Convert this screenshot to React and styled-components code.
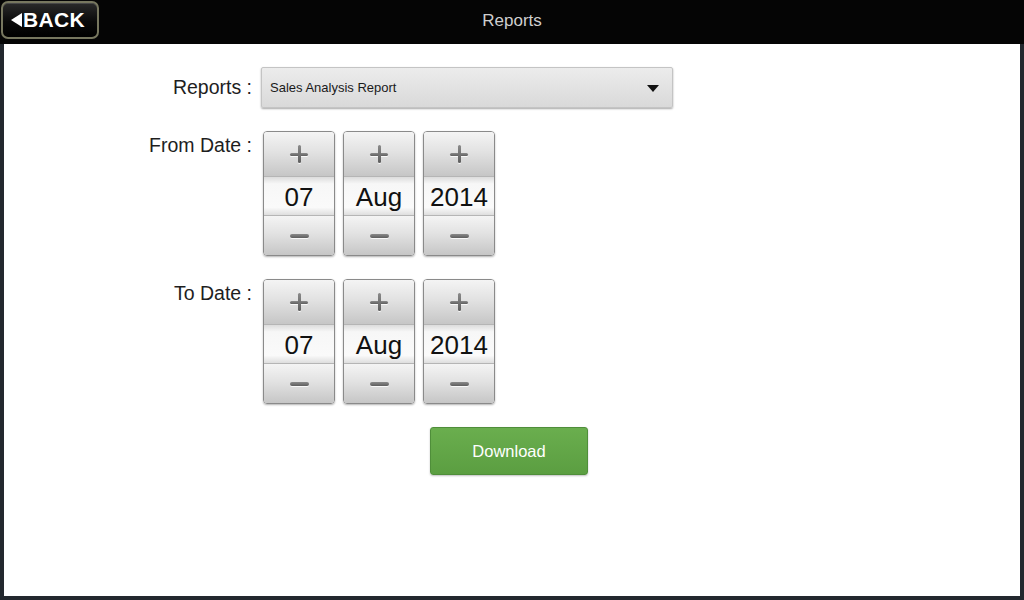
import React from "react";
import styled, { createGlobalStyle } from "styled-components";

const Global = createGlobalStyle`
  html, body { margin: 0; padding: 0; background: #23282e; }
  body { font-family: "Liberation Sans", Arial, sans-serif; }
  * { box-sizing: border-box; }
`;

const Screen = styled.div`
  width: 1024px;
  height: 600px;
  display: flex;
  flex-direction: column;
  background: #23282e;
  overflow: hidden;
`;

const TopBar = styled.header`
  height: 44px;
  flex: 0 0 44px;
  background: #050505;
  display: flex;
  align-items: center;
  position: relative;
`;

const BackButton = styled.button`
  position: absolute;
  left: 1px;
  top: 1px;
  width: 98px;
  height: 38px;
  border: 2px solid #77775f;
  border-radius: 7px;
  background: linear-gradient(#2a2a2a, #0a0a0a 55%, #000);
  box-shadow: inset 0 1px 0 rgba(255,255,255,0.15);
  color: #fff;
  display: flex;
  align-items: center;
  justify-content: center;
  gap: 1px;
  padding: 0 4px 0 0;
  font-family: "Liberation Sans", Arial, sans-serif;
  font-weight: bold;
  font-size: 21px;
  letter-spacing: 0.3px;
  cursor: pointer;
`;

const Title = styled.h1`
  flex: 1;
  margin: 0;
  text-align: center;
  color: #cfcfcf;
  font-size: 17px;
  font-weight: normal;
  font-family: "Liberation Sans", Arial, sans-serif;
  padding-bottom: 3px;
`;

const Content = styled.main`
  flex: 1;
  margin: 0 4px 4px 4px;
  background: #fff;
  padding-top: 23px;
  display: flex;
  flex-direction: column;
`;

const Form = styled.div`
  display: grid;
  grid-template-columns: 248px auto;
  column-gap: 9px;
  row-gap: 23px;
  align-items: start;
`;

const Label = styled.div`
  text-align: right;
  font-size: 19.5px;
  color: #1e1e1e;
  padding-top: ${(p) => p.$top}px;
  line-height: 24px;
`;

const Select = styled.div`
  width: 412px;
  height: 41px;
  border: 1px solid #c4c4c4;
  border-radius: 2px;
  background: linear-gradient(#ececec, #d9d9d9);
  box-shadow: 0 1px 2px rgba(0,0,0,0.35);
  display: flex;
  align-items: center;
  justify-content: space-between;
  padding: 0 13px 0 8px;
  font-size: 13px;
  color: #1a1a1a;
`;

const Caret = styled.span`
  width: 0;
  height: 0;
  border-left: 6px solid transparent;
  border-right: 6px solid transparent;
  border-top: 7px solid #111;
  margin-top: 1px;
`;

const Steppers = styled.div`
  display: flex;
  gap: 8px;
  margin-left: 2px;
`;

const Stepper = styled.div`
  width: 72px;
  height: 125px;
  border: 1px solid #8a8a8a;
  border-radius: 4px;
  overflow: hidden;
  display: flex;
  flex-direction: column;
  box-shadow: 0 1px 2px rgba(0,0,0,0.3);
`;

const StepButton = styled.div`
  height: ${(p) => p.$h}px;
  background: linear-gradient(#f4f4f4, #e2e2e2 45%, #c6c6c6);
  display: flex;
  align-items: center;
  justify-content: center;
  position: relative;
`;

const Value = styled.div`
  height: 40px;
  background: linear-gradient(#dcdcdc, #f7f7f7 18%, #fafafa 80%, #dedede);
  border-top: 1px solid #b5b5b5;
  border-bottom: 1px solid #b5b5b5;
  display: flex;
  align-items: center;
  justify-content: center;
  font-size: 26px;
  padding-top: 2px;
  color: #111;
  font-family: "Liberation Sans", Arial, sans-serif;
`;

const Bar = styled.span`
  position: absolute;
  background: linear-gradient(#8a8a8a, #5e5e5e);
  border-radius: 2px;
  box-shadow: 0 1px 0 rgba(255,255,255,0.8);
`;

const PlusH = styled(Bar)`
  width: 18px;
  height: 3px;
`;
const PlusV = styled(Bar)`
  width: 3px;
  height: 18px;
`;
const Minus = styled(Bar)`
  width: 19px;
  height: 4px;
`;

const DownloadRow = styled.div`
  display: flex;
  justify-content: center;
  margin-top: 23px;
  padding-right: 6px;
`;

const Download = styled.button`
  width: 158px;
  height: 48px;
  border: 1px solid #4f8e3a;
  border-radius: 3px;
  background: linear-gradient(#6aae4e, #5b9e41);
  color: #fff;
  font-family: "Liberation Sans", Arial, sans-serif;
  font-size: 16.5px;
  box-shadow: 0 1px 2px rgba(0,0,0,0.25);
  cursor: pointer;
`;

function DateStepper({ value }) {
  return (
    <Stepper>
      <StepButton $h={44}>
        <PlusH />
        <PlusV />
      </StepButton>
      <Value>{value}</Value>
      <StepButton $h={39}>
        <Minus />
      </StepButton>
    </Stepper>
  );
}

function DatePicker({ d, m, y }) {
  return (
    <Steppers>
      <DateStepper value={d} />
      <DateStepper value={m} />
      <DateStepper value={y} />
    </Steppers>
  );
}

export default function App() {
  return (
    <>
      <Global />
      <Screen>
        <TopBar>
          <BackButton>
            <svg width="11" height="14" viewBox="0 0 11 14">
              <polygon points="11,0 11,14 0,7" fill="#fff" />
            </svg>
            BACK
          </BackButton>
          <Title>Reports</Title>
        </TopBar>
        <Content>
          <Form>
            <Label $top={8}>Reports :</Label>
            <Select>
              <span>Sales Analysis Report</span>
              <Caret />
            </Select>
            <Label $top={2}>From Date :</Label>
            <DatePicker d="07" m="Aug" y="2014" />
            <Label $top={2}>To Date :</Label>
            <DatePicker d="07" m="Aug" y="2014" />
          </Form>
          <DownloadRow>
            <Download>Download</Download>
          </DownloadRow>
        </Content>
      </Screen>
    </>
  );
}
